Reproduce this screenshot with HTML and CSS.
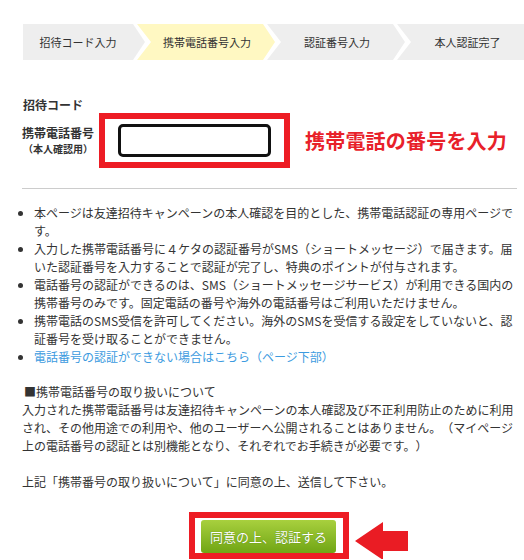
FILE: index.html
```html
<!DOCTYPE html>
<html lang="ja">
<head>
	<meta charset="utf-8">
	<meta name="viewport" content="width=device-width,initial-scale=1">
	<title>携帯電話番号入力</title>
	<link rel="stylesheet" href="styles.css">
</head>
<body>
	<ol class="steps">
		<li class="first">招待コード入力</li>
		<li class="now">携帯電話番号入力</li>
		<li>認証番号入力</li>
		<li class="last">本人認証完了</li>
	</ol>
	<div class="page">
		<form class="tel">
			<div class="code">招待コード</div>
			<div class="row">
				<label class="lbl" for="tel">携帯電話番号<small>（本人確認用）</small></label>
				<div class="mark">
					<input type="tel" id="tel" class="in">
				</div>
				<p class="note">携帯電話の番号を入力</p>
			</div>
		</form>
		<ul class="rules">
			<li>本ページは友達招待キャンペーンの本人確認を目的とした、携帯電話認証の専用ページです。</li>
			<li>入力した携帯電話番号に４ケタの認証番号がSMS（ショートメッセージ）で届きます。届いた認証番号を入力することで認証が完了し、特典のポイントが付与されます。</li>
			<li>電話番号の認証ができるのは、SMS（ショートメッセージサービス）が利用できる国内の携帯番号のみです。固定電話の番号や海外の電話番号はご利用いただけません。</li>
			<li>携帯電話のSMS受信を許可してください。海外のSMSを受信する設定をしていないと、認証番号を受け取ることができません。</li>
			<li><a href="#help">電話番号の認証ができない場合はこちら（ページ下部）</a></li>
		</ul>
		<div class="terms">
			<p class="ttl">■携帯電話番号の取り扱いについて</p>
			<p>入力された携帯電話番号は友達招待キャンペーンの本人確認及び不正利用防止のために利用され、その他用途での利用や、他のユーザーへ公開されることはありません。（マイページ上の電話番号の認証とは別機能となり、それぞれでお手続きが必要です。）</p>
			<p class="agree">上記「携帯番号の取り扱いについて」に同意の上、送信して下さい。</p>
		</div>
		<div class="submit">
			<div class="mark btnmark">
				<button type="submit" class="btn">同意の上、認証する</button>
				<svg class="arrow" width="53" height="38" viewBox="0 0 53 38">
					<polygon points="0,19 28,0 28,9 53,9 53,29 28,29 28,38" fill="#ea1c24"></polygon>
				</svg>
			</div>
		</div>
	</div>
</body>
</html>
```

FILE: styles.css
```css
* {
	margin: 0;
	padding: 0;
	box-sizing: border-box;
}
body {
	font-family: "Noto Sans CJK JP", "Noto Sans", sans-serif;
	font-size: 12px;
	line-height: 18px;
	color: #333;
	background: #fff;
	text-spacing-trim: space-all;
}
.steps {
	display: flex;
	list-style: none;
	margin: 24px 0 0 23px;
	height: 36px;
	overflow: hidden;
}
.steps li {
	flex: none;
	width: 138px;
	margin-left: -8px;
	padding: 0 12px 0 14px;
	background: #eee;
	font-size: 11px;
	line-height: 36px;
	text-align: center;
	clip-path: polygon(0 0, calc(100% - 12px) 0, 100% 50%, calc(100% - 12px) 100%, 0 100%, 14px 50%);
}
.steps .first {
	width: 122px;
	margin-left: 0;
	padding-left: 0;
	clip-path: polygon(0 0, calc(100% - 12px) 0, 100% 50%, calc(100% - 12px) 100%, 0 100%);
}
.steps .now {
	background: #fff8c2;
}
.steps .last {
	width: 127px;
	padding-right: 0;
	clip-path: polygon(0 0, 100% 0, 100% 100%, 0 100%, 14px 50%);
}
.page {
	padding: 0 7px 0 22px;
}
.tel {
	padding: 38px 0 20px;
	border-bottom: 1px solid #ccc;
}
.code {
	font-weight: bold;
	line-height: 14px;
	margin-left: 1px;
}
.row {
	display: flex;
	align-items: center;
	margin-top: 1px;
}
.lbl {
	width: 77px;
	padding: 0 5px 1px 0;
	font-weight: bold;
	line-height: 18px;
	text-align: center;
}
.lbl small {
	display: block;
	font-size: 10px;
	line-height: 14px;
}
.mark {
	border: 6px solid #ed1c24;
	padding: 5px 13px;
}
.in {
	display: block;
	width: 153px;
	height: 33px;
	border: 3px solid #111;
	border-radius: 5px;
	background: #fff;
}
.in:focus {
	outline: none;
}
.note {
	margin-left: 15px;
	font-size: 20px;
	font-weight: bold;
	color: #e8212a;
	letter-spacing: .2px;
}
.rules {
	margin: 15px 0 0 12px;
}
.rules a {
	color: #3c9be0;
	text-decoration: none;
}
.terms {
	margin-top: 17px;
}
.terms .ttl {
	padding-left: 2px;
}
.agree {
	margin-top: 18px;
}
.submit {
	display: flex;
	justify-content: center;
	margin-top: 21px;
	padding-right: 1px;
}
.btnmark {
	position: relative;
	padding: 2px 7px 0 6px;
}
.btn {
	display: block;
	width: 135px;
	height: 33px;
	border: none;
	border-radius: 3px;
	background: linear-gradient(#a8d03e, #70a514);
	color: #fff;
	font-family: inherit;
	font-size: 13px;
	text-shadow: 0 0 1px #4a7a08;
}
.arrow {
	position: absolute;
	left: calc(100% + 12px);
	top: 4px;
}
```
